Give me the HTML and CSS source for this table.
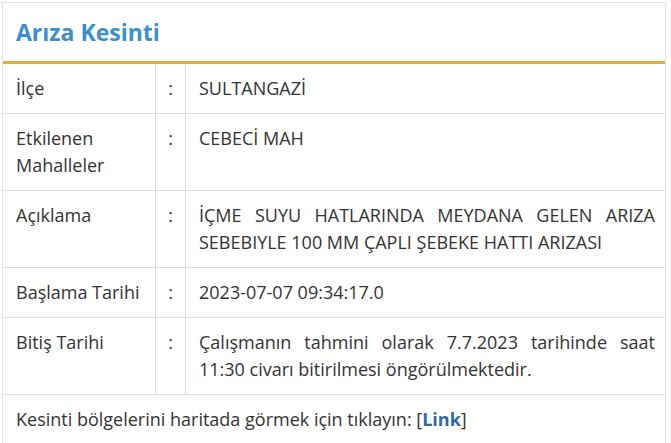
FILE: index.html
```html
<html lang="tr">

<head>
    <meta charset="UTF-8">
    <meta name="viewport" content="width=device-width, initial-scale=1.0">
    <title>Arıza Kesinti</title>
    <link rel="stylesheet" href="styles.css">
</head>

<body>
    <div class="panel">
        <h2 class="panel-title">Arıza Kesinti</h2>
        <table class="outage-table">
            <tr>
                <td class="label">İlçe</td>
                <td class="colon">:</td>
                <td class="value">SULTANGAZİ</td>
            </tr>
            <tr>
                <td class="label">Etkilenen Mahalleler</td>
                <td class="colon">:</td>
                <td class="value">CEBECİ MAH</td>
            </tr>
            <tr>
                <td class="label">Açıklama</td>
                <td class="colon">:</td>
                <td class="value">İÇME SUYU HATLARINDA MEYDANA GELEN ARIZA SEBEBIYLE 100 MM ÇAPLI ŞEBEKE HATTI ARIZASI</td>
            </tr>
            <tr>
                <td class="label">Başlama Tarihi</td>
                <td class="colon">:</td>
                <td class="value">2023-07-07 09:34:17.0</td>
            </tr>
            <tr>
                <td class="label">Bitiş Tarihi</td>
                <td class="colon">:</td>
                <td class="value">Çalışmanın tahmini olarak 7.7.2023 tarihinde saat 11:30 civarı bitirilmesi öngörülmektedir.</td>
            </tr>
            <tr>
                <td class="map-note" colspan="3">Kesinti bölgelerini haritada görmek için tıklayın: [<a href="#" class="map-link">Link</a>]</td>
            </tr>
        </table>
    </div>
</body>

</html>
```

FILE: styles.css
```css
/* Global Styles */
body {
    font-family: 'Open Sans', 'Noto Sans', sans-serif;
    margin: 0;
    padding: 0;
    background-color: #fff;
    color: #333;
}

/* Panel */
.panel {
    margin: 2px 5px 0 2px;
    border: 1px solid #e3e3e3;
    border-bottom: none;
}

.panel-title {
    margin: 0;
    padding: 0 13px;
    height: 58px;
    line-height: 58px;
    font-size: 23px;
    font-weight: 700;
    color: #3d8fcb;
    border-bottom: 3px solid #dfae3d;
}

/* Table */
.outage-table {
    width: 100%;
    border-collapse: collapse;
    font-size: 18px;
    line-height: 27px;
}

.outage-table td {
    padding: 11px 13px;
    vertical-align: top;
    border-top: 1px solid #dcdcdc;
}

.outage-table tr:first-child td {
    border-top: none;
}

.outage-table .label {
    width: 127px;
    padding-right: 12px;
    border-right: 1px solid #dcdcdc;
}

.outage-table .colon {
    width: 29px;
    padding: 11px 0;
    text-align: center;
    border-right: 1px solid #dcdcdc;
}

.outage-table .value {
    padding-right: 10px;
    text-align: justify;
}

.map-link {
    color: #2d6b9f;
    font-weight: 700;
    text-decoration: none;
}
```
